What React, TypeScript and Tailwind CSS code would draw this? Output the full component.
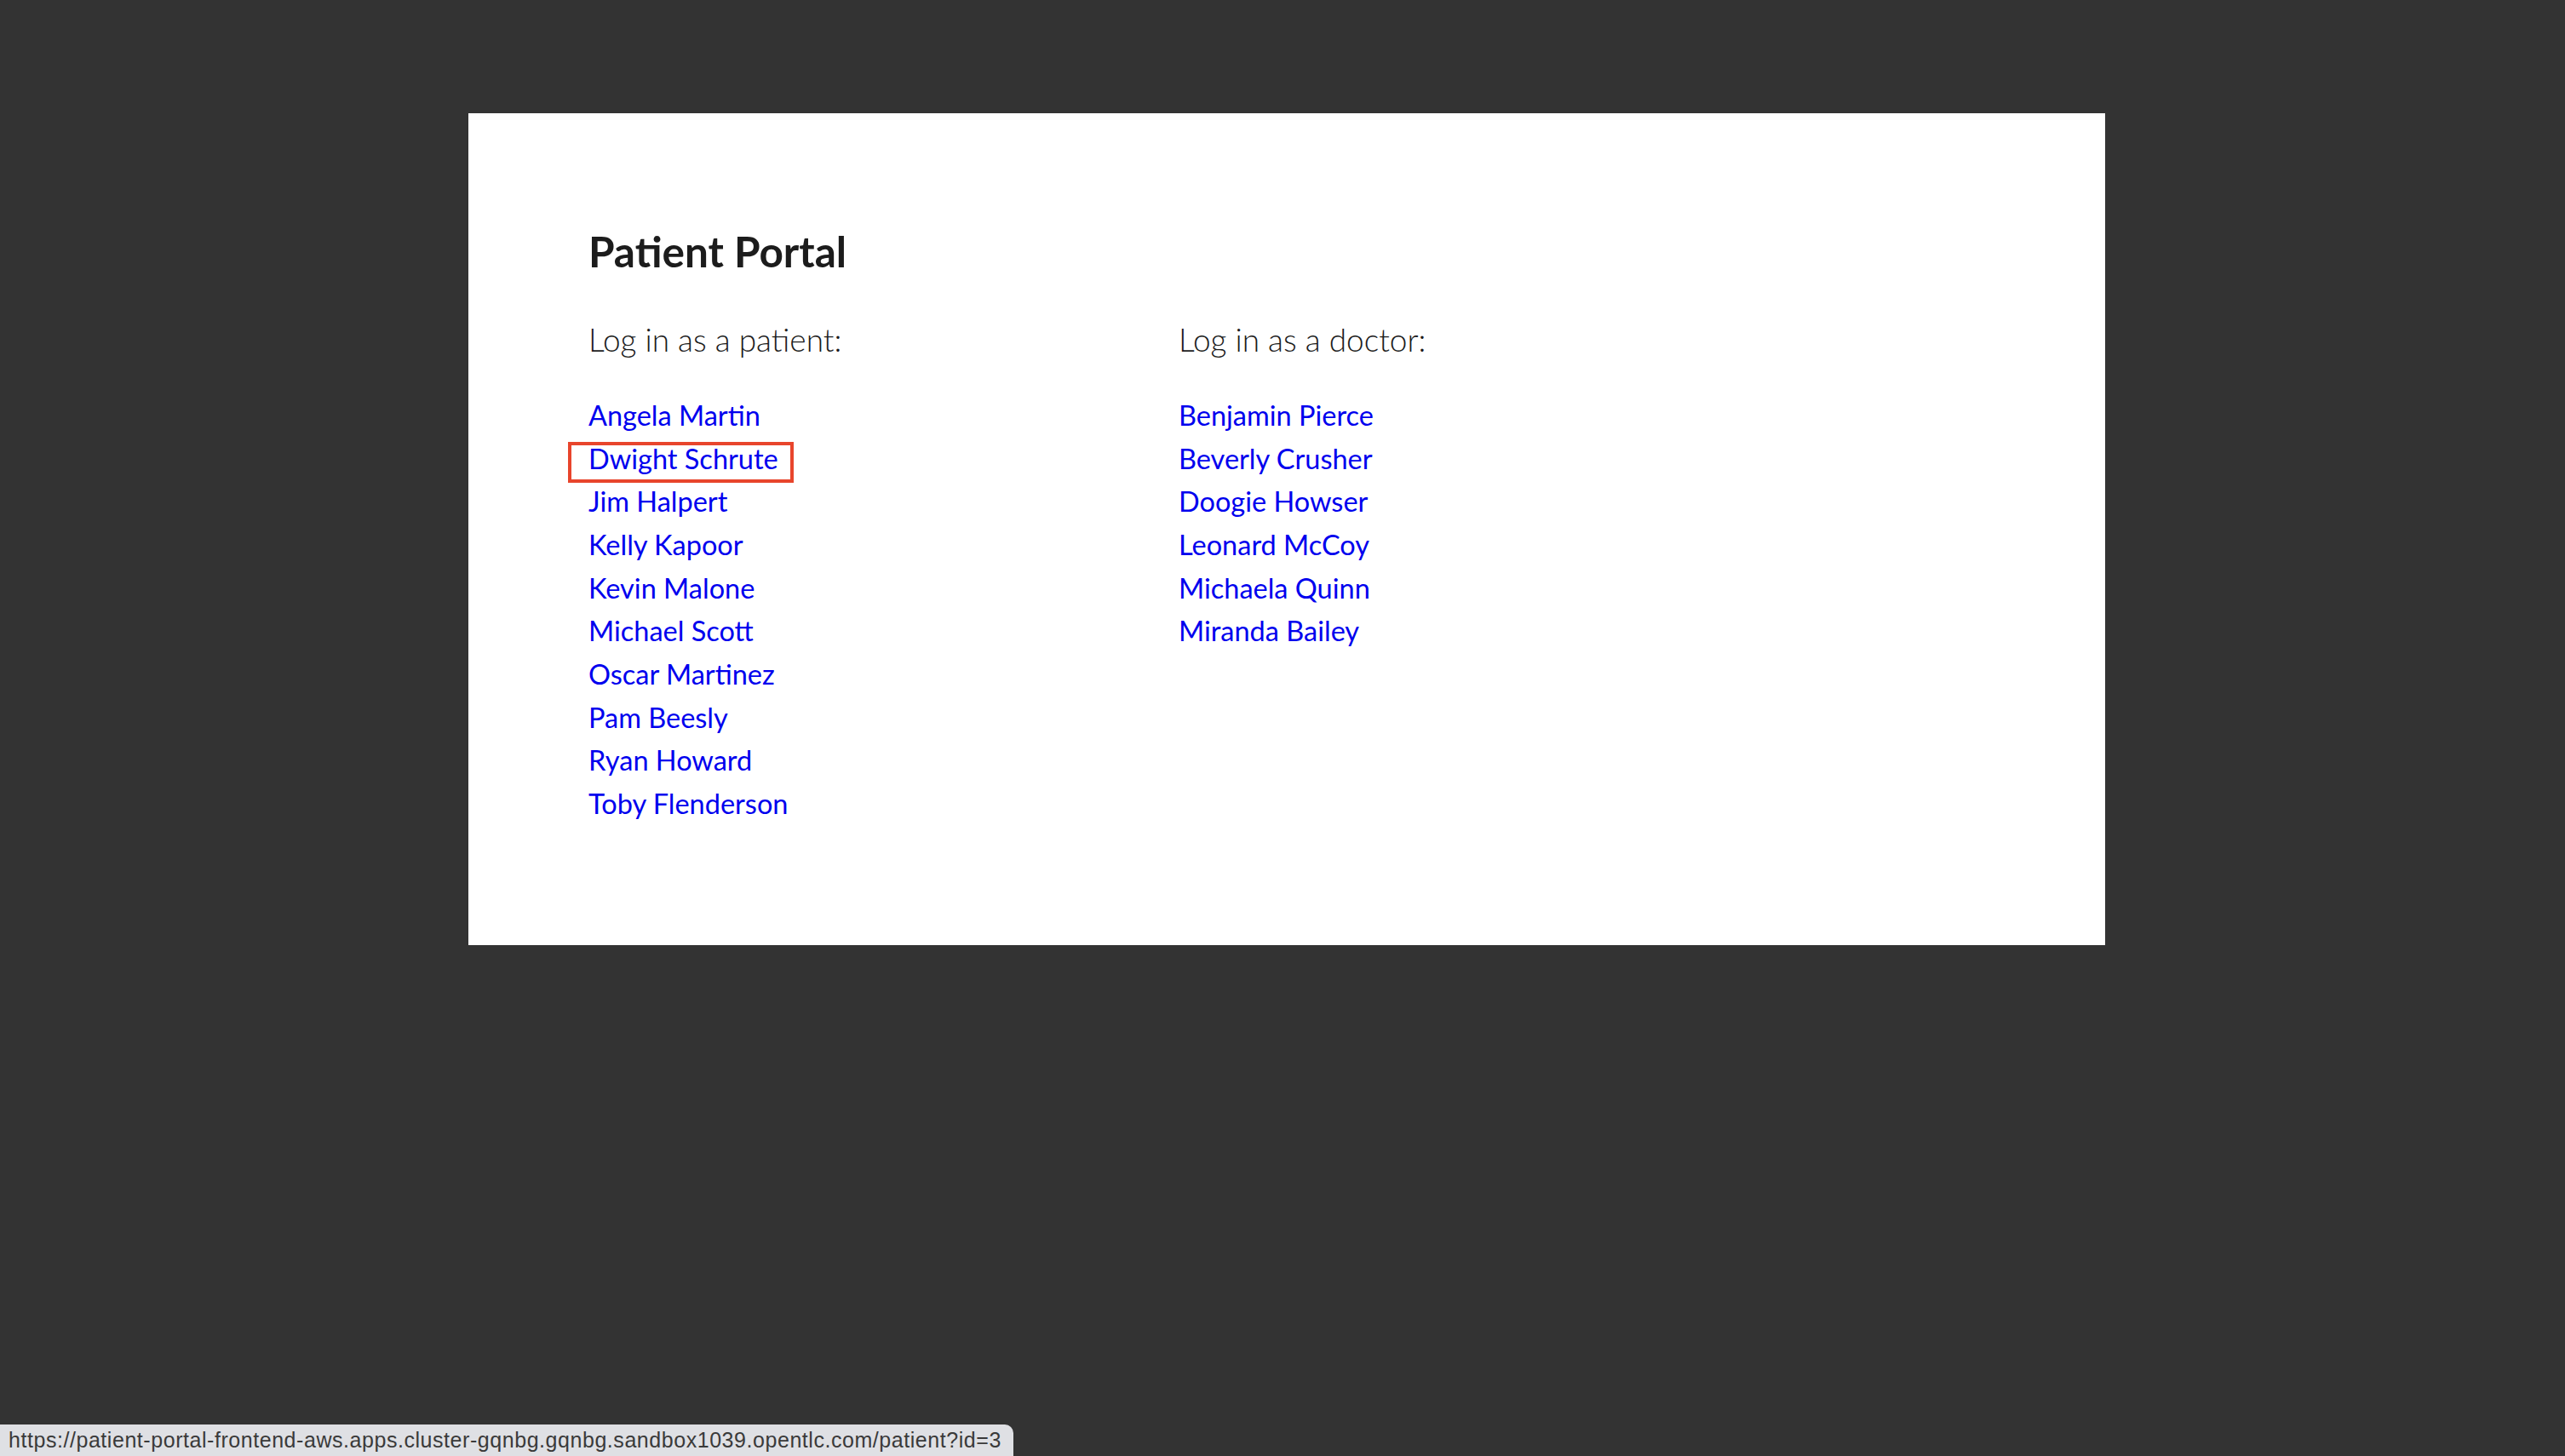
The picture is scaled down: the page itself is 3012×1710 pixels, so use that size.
const PATIENTS = [
  "Angela Martin",
  "Dwight Schrute",
  "Jim Halpert",
  "Kelly Kapoor",
  "Kevin Malone",
  "Michael Scott",
  "Oscar Martinez",
  "Pam Beesly",
  "Ryan Howard",
  "Toby Flenderson",
];

const DOCTORS = [
  "Benjamin Pierce",
  "Beverly Crusher",
  "Doogie Howser",
  "Leonard McCoy",
  "Michaela Quinn",
  "Miranda Bailey",
];

function LoginColumn({ title, names, highlight }: { title: string; names: string[]; highlight?: string }) {
  return (
    <div className="flex flex-col">
      <h2 className="text-[37px] leading-[44px] font-light text-[#1c1c1c]">{title}</h2>
      <ul className="mt-[42px]">
        {names.map((name) => (
          <li key={name} className="text-[32.5px] leading-[50.67px]">
            <a href="#" className="relative inline-block text-[#0000ee]">
              {name}
              {name === highlight && (
                <span className="absolute left-[-24px] top-[5px] w-[265px] h-[48px] border-4 border-[#e8452c]" />
              )}
            </a>
          </li>
        ))}
      </ul>
    </div>
  );
}

export default function App() {
  return (
    <div className="relative min-h-[1710px] bg-[#333333] pt-[133px] pl-[550px] font-['Lato',sans-serif]">
      <div className="w-[1922px] h-[977px] bg-white pt-[132px] pl-[141px]">
        <h1 className="text-[49.5px] leading-[60px] font-bold text-[#1c1c1c]">Patient Portal</h1>

        <div className="flex mt-[52px]">
          <div className="w-[693px]">
            <LoginColumn title="Log in as a patient:" names={PATIENTS} highlight="Dwight Schrute" />
          </div>
          <LoginColumn title="Log in as a doctor:" names={DOCTORS} />
        </div>
      </div>

      {/* browser status bubble */}
      <div className="absolute left-0 bottom-0 w-[1190px] h-[37px] bg-[#dfe0e4] rounded-tr-[10px] pl-[10px] font-['Liberation_Sans',sans-serif] text-[25px] tracking-[0.55px] leading-[37px] text-[#3a3a3a] whitespace-nowrap overflow-hidden">
        https://patient-portal-frontend-aws.apps.cluster-gqnbg.gqnbg.sandbox1039.opentlc.com/patient?id=3
      </div>
    </div>
  );
}
